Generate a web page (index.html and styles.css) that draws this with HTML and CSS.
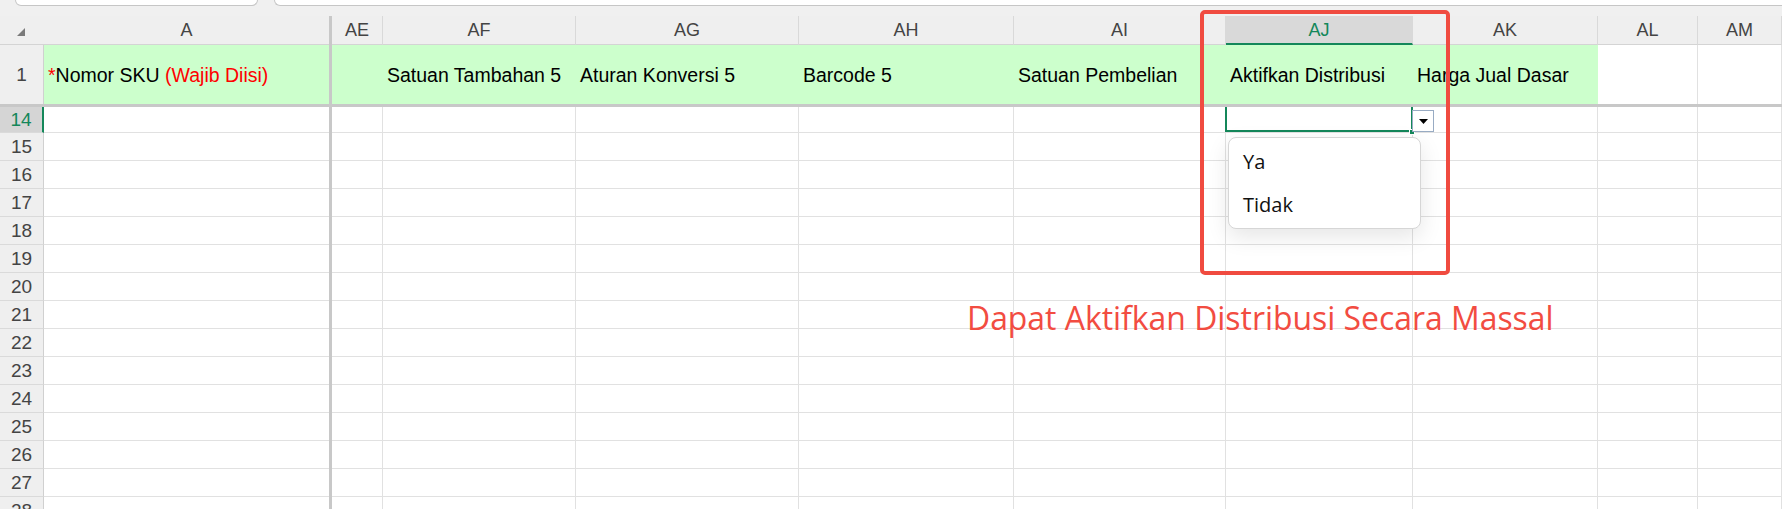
FILE: index.html
```html
<!DOCTYPE html>
<html>
<head>
<meta charset="utf-8">
<title>Sheet</title>
<link rel="stylesheet" href="styles.css">
</head>
<body>
<div class="app">
  <div class="topbar">
    <div class="namebox"></div>
    <div class="formulabar"></div>
  </div>
  <div class="sheet">
    <div class="row hdr">
      <div class="corner"><svg width="8" height="8" viewBox="0 0 8 8"><polygon points="8,0 8,8 0,8" fill="#7a7a7a"/></svg></div>
      <div class="ch last">A</div>
      <div class="fz"></div>
      <div class="ch">AE</div>
      <div class="ch">AF</div>
      <div class="ch">AG</div>
      <div class="ch">AH</div>
      <div class="ch">AI</div>
      <div class="ch sel">AJ</div>
      <div class="ch">AK</div>
      <div class="ch">AL</div>
      <div class="ch">AM</div>
    </div>
    <div class="row r1">
      <div class="rh">1</div>
      <div class="cell g"><span class="req">*</span>Nomor SKU&nbsp;<span class="req">(Wajib Diisi)</span></div>
      <div class="fz"></div>
      <div class="cell g"></div>
      <div class="cell g">Satuan Tambahan 5</div>
      <div class="cell g">Aturan Konversi 5</div>
      <div class="cell g">Barcode 5</div>
      <div class="cell g">Satuan Pembelian</div>
      <div class="cell g">Aktifkan Distribusi</div>
      <div class="cell g">Harga Jual Dasar</div>
      <div class="cell"></div>
      <div class="cell"></div>
    </div>
    <div class="freeze"></div>
    <div class="row r r14">
      <div class="rh sel">14</div>
      <div class="cell a"></div>
      <div class="fz"></div>
      <div class="cell"></div>
      <div class="cell"></div>
      <div class="cell"></div>
      <div class="cell"></div>
      <div class="cell"></div>
      <div class="cell active">
        <div class="selbox"></div>
        <div class="handle"></div>
        <div class="ddbtn"><svg width="9" height="5" viewBox="0 0 9 5"><polygon points="0,0 9,0 4.5,5" fill="#000"/></svg></div>
        <div class="ddlist">
          <div class="dditem">Ya</div>
          <div class="dditem">Tidak</div>
        </div>
      </div>
      <div class="cell"></div>
      <div class="cell"></div>
      <div class="cell"></div>
    </div>
    <div class="row r"><div class="rh">15</div><div class="cell a"></div><div class="fz"></div><div class="cell"></div><div class="cell"></div><div class="cell"></div><div class="cell"></div><div class="cell"></div><div class="cell"></div><div class="cell"></div><div class="cell"></div><div class="cell"></div></div>
    <div class="row r"><div class="rh">16</div><div class="cell a"></div><div class="fz"></div><div class="cell"></div><div class="cell"></div><div class="cell"></div><div class="cell"></div><div class="cell"></div><div class="cell"></div><div class="cell"></div><div class="cell"></div><div class="cell"></div></div>
    <div class="row r"><div class="rh">17</div><div class="cell a"></div><div class="fz"></div><div class="cell"></div><div class="cell"></div><div class="cell"></div><div class="cell"></div><div class="cell"></div><div class="cell"></div><div class="cell"></div><div class="cell"></div><div class="cell"></div></div>
    <div class="row r"><div class="rh">18</div><div class="cell a"></div><div class="fz"></div><div class="cell"></div><div class="cell"></div><div class="cell"></div><div class="cell"></div><div class="cell"></div><div class="cell"></div><div class="cell"></div><div class="cell"></div><div class="cell"></div></div>
    <div class="row r"><div class="rh">19</div><div class="cell a"></div><div class="fz"></div><div class="cell"></div><div class="cell"></div><div class="cell"></div><div class="cell"></div><div class="cell"></div><div class="cell"></div><div class="cell"></div><div class="cell"></div><div class="cell"></div></div>
    <div class="row r"><div class="rh">20</div><div class="cell a"></div><div class="fz"></div><div class="cell"></div><div class="cell"></div><div class="cell"></div><div class="cell"></div><div class="cell"></div><div class="cell"></div><div class="cell"></div><div class="cell"></div><div class="cell"></div></div>
    <div class="row r"><div class="rh">21</div><div class="cell a"></div><div class="fz"></div><div class="cell"></div><div class="cell"></div><div class="cell"></div><div class="cell"></div><div class="cell"></div><div class="cell"></div><div class="cell"></div><div class="cell"></div><div class="cell"></div></div>
    <div class="row r"><div class="rh">22</div><div class="cell a"></div><div class="fz"></div><div class="cell"></div><div class="cell"></div><div class="cell"></div><div class="cell"></div><div class="cell"></div><div class="cell"></div><div class="cell"></div><div class="cell"></div><div class="cell"></div></div>
    <div class="row r"><div class="rh">23</div><div class="cell a"></div><div class="fz"></div><div class="cell"></div><div class="cell"></div><div class="cell"></div><div class="cell"></div><div class="cell"></div><div class="cell"></div><div class="cell"></div><div class="cell"></div><div class="cell"></div></div>
    <div class="row r"><div class="rh">24</div><div class="cell a"></div><div class="fz"></div><div class="cell"></div><div class="cell"></div><div class="cell"></div><div class="cell"></div><div class="cell"></div><div class="cell"></div><div class="cell"></div><div class="cell"></div><div class="cell"></div></div>
    <div class="row r"><div class="rh">25</div><div class="cell a"></div><div class="fz"></div><div class="cell"></div><div class="cell"></div><div class="cell"></div><div class="cell"></div><div class="cell"></div><div class="cell"></div><div class="cell"></div><div class="cell"></div><div class="cell"></div></div>
    <div class="row r"><div class="rh">26</div><div class="cell a"></div><div class="fz"></div><div class="cell"></div><div class="cell"></div><div class="cell"></div><div class="cell"></div><div class="cell"></div><div class="cell"></div><div class="cell"></div><div class="cell"></div><div class="cell"></div></div>
    <div class="row r"><div class="rh">27</div><div class="cell a"></div><div class="fz"></div><div class="cell"></div><div class="cell"></div><div class="cell"></div><div class="cell"></div><div class="cell"></div><div class="cell"></div><div class="cell"></div><div class="cell"></div><div class="cell"></div></div>
    <div class="row r"><div class="rh">28</div><div class="cell a"></div><div class="fz"></div><div class="cell"></div><div class="cell"></div><div class="cell"></div><div class="cell"></div><div class="cell"></div><div class="cell"></div><div class="cell"></div><div class="cell"></div><div class="cell"></div></div>
  </div>
  <div class="callout-box"></div>
  <div class="callout-text">Dapat Aktifkan Distribusi Secara Massal</div>
</div>
</body>
</html>
```

FILE: styles.css
```css
* { box-sizing: border-box; }
html, body { margin: 0; padding: 0; }
body {
  width: 1782px;
  height: 509px;
  overflow: hidden;
  background: #fff;
  font-family: "Liberation Sans", Arial, sans-serif;
}
.app {
  position: relative;
  width: 1782px;
  height: 509px;
  overflow: hidden;
  background: #fff;
}
.topbar {
  height: 16px;
  background: #f0f0f0;
  display: flex;
  gap: 16px;
  padding-left: 15px;
}
.namebox {
  width: 243px;
  height: 6px;
  background: #fff;
  border: 1px solid #c6c6c6;
  border-top: 0;
  border-radius: 0 0 6px 6px;
}
.formulabar {
  flex: 1;
  height: 6px;
  background: #fff;
  border: 1px solid #c6c6c6;
  border-top: 0;
  border-right: 0;
  border-radius: 0 0 0 6px;
}
.row {
  display: grid;
  grid-template-columns: 44px 285px 3px 51px 193px 223px 215px 212px 187px 185px 100px 1fr;
}
.hdr { height: 29px; background: #efefef; }
.corner {
  border-bottom: 1px solid #d4d4d4;
  padding: 12px 0 0 17px;
}
.corner svg { display: block; }
.ch {
  border-right: 1px solid #d9d9d9;
  border-bottom: 1px solid #d4d4d4;
  display: flex;
  align-items: center;
  justify-content: center;
  font-size: 18px;
  color: #444;
}
.ch.last { border-right: 0; }
.ch.sel {
  background: #d9d9d9;
  color: #14875a;
  border-bottom: 2px solid #14875a;
  padding-top: 1px;
}
.fz { background: #c8c8c8; }
.freeze { height: 3px; background: #c8c8c8; }
.rh {
  background: #efefef;
  border-right: 1px solid #d0d0d0;
  border-bottom: 1px solid #dadada;
  display: flex;
  align-items: center;
  justify-content: center;
  font-size: 19px;
  color: #444;
}
.rh.sel {
  background: #d5d5d5;
  color: #14875a;
  border-right: 2px solid #14875a;
}
.cell {
  border-right: 1px solid #e1e1e1;
  border-bottom: 1px solid #e1e1e1;
}
.cell.a { border-right: 0; }
.r1 { height: 59px; }
.r1 .rh, .r1 .cell { border-bottom: 0; }
.r1 .cell.g {
  background: #ccffcc;
  border-right-color: #ccffcc;
  display: flex;
  align-items: center;
  padding: 2px 0 0 4px;
  font-size: 19.5px;
  color: #000;
  white-space: nowrap;
}
.req { color: #ff0000; }
.r { height: 28px; }
.r14 { height: 26px; }
.active { position: relative; z-index: 5; }
.selbox {
  position: absolute;
  left: -1px;
  right: -1px;
  top: 0;
  bottom: 0;
  border: 2px solid #14875a;
  border-top: 0;
}
.handle {
  position: absolute;
  right: -3px;
  bottom: -3px;
  width: 6px;
  height: 6px;
  background: #14875a;
  border: 1px solid #fff;
}
.ddbtn {
  position: absolute;
  left: 100%;
  top: 3px;
  width: 22px;
  height: 22px;
  background: #fff;
  border: 1px solid #98abc3;
  display: flex;
  align-items: center;
  justify-content: center;
  padding-top: 1px;
}
.ddbtn svg { display: block; }
.ddlist {
  position: absolute;
  left: 2px;
  top: 30px;
  width: 193px;
  height: 92px;
  background: #fff;
  border: 1px solid #d6d6d6;
  border-radius: 8px;
  box-shadow: 0 8px 22px rgba(0, 0, 0, 0.10);
  padding: 2px 0 0;
  font-family: "Open Sans", "Noto Sans", sans-serif;
  font-size: 20px;
  color: #111;
}
.dditem {
  height: 43px;
  display: flex;
  align-items: center;
  padding-left: 14px;
}
.callout-box {
  position: absolute;
  left: 1200px;
  top: 10px;
  width: 250px;
  height: 265px;
  border: 4px solid #f04b40;
  border-radius: 5px;
  z-index: 10;
}
.callout-text {
  position: absolute;
  left: 967px;
  top: 296px;
  font-family: "Open Sans", "Noto Sans", sans-serif;
  font-size: 31.9px;
  line-height: 43px;
  color: #f24c41;
  white-space: nowrap;
  z-index: 10;
}
```
